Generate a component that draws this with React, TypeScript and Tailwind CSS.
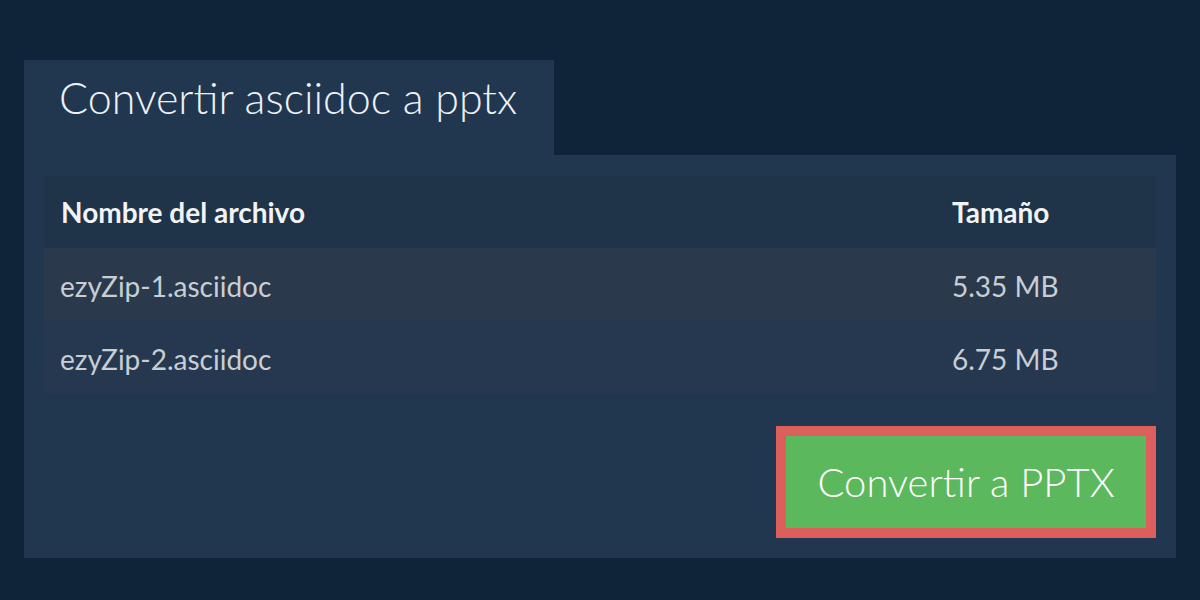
const files = [
  { name: "ezyZip-1.asciidoc", size: "5.35 MB", bg: "bg-[#2a3a4c]" },
  { name: "ezyZip-2.asciidoc", size: "6.75 MB", bg: "bg-[#253850]" },
]

export default function App() {
  return (
    <div className="min-h-[600px] w-full bg-[#0f2339] pt-[60px] px-6 pb-[42px] font-['Lato',sans-serif]">
      <div className="h-[95px] w-[530px] bg-[#213750] px-[35px] pt-[16px]">
        <h1 className="whitespace-nowrap text-[43px] leading-none font-light text-[#eef1f4]">
          Convertir asciidoc a pptx
        </h1>
      </div>

      <div className="flex flex-col bg-[#213750] px-5 pt-[21px] pb-5">
        <table className="w-full border-collapse text-left">
          <thead>
            <tr className="h-[72px] bg-[#1f3349]">
              <th className="pl-[17px] text-[28px] font-bold text-[#f1f3f5]">
                Nombre del archivo
              </th>
              <th className="w-[204px] text-[28px] font-bold text-[#f1f3f5]">
                Tamaño
              </th>
            </tr>
          </thead>
          <tbody>
            {files.map((f) => (
              <tr key={f.name} className={`h-[73px] ${f.bg}`}>
                <td className="pl-[16px] pt-[2px] text-[28px] text-[#c9ced4]">
                  {f.name}
                </td>
                <td className="pt-[2px] text-[28px] text-[#c9ced4]">{f.size}</td>
              </tr>
            ))}
          </tbody>
        </table>

        <div className="mt-8 flex justify-end">
          <button className="h-[112px] w-[380px] border-[10px] border-[#dc5f5c] bg-[#5cb85c] text-[40px] font-light text-white">
            Convertir a PPTX
          </button>
        </div>
      </div>
    </div>
  )
}
